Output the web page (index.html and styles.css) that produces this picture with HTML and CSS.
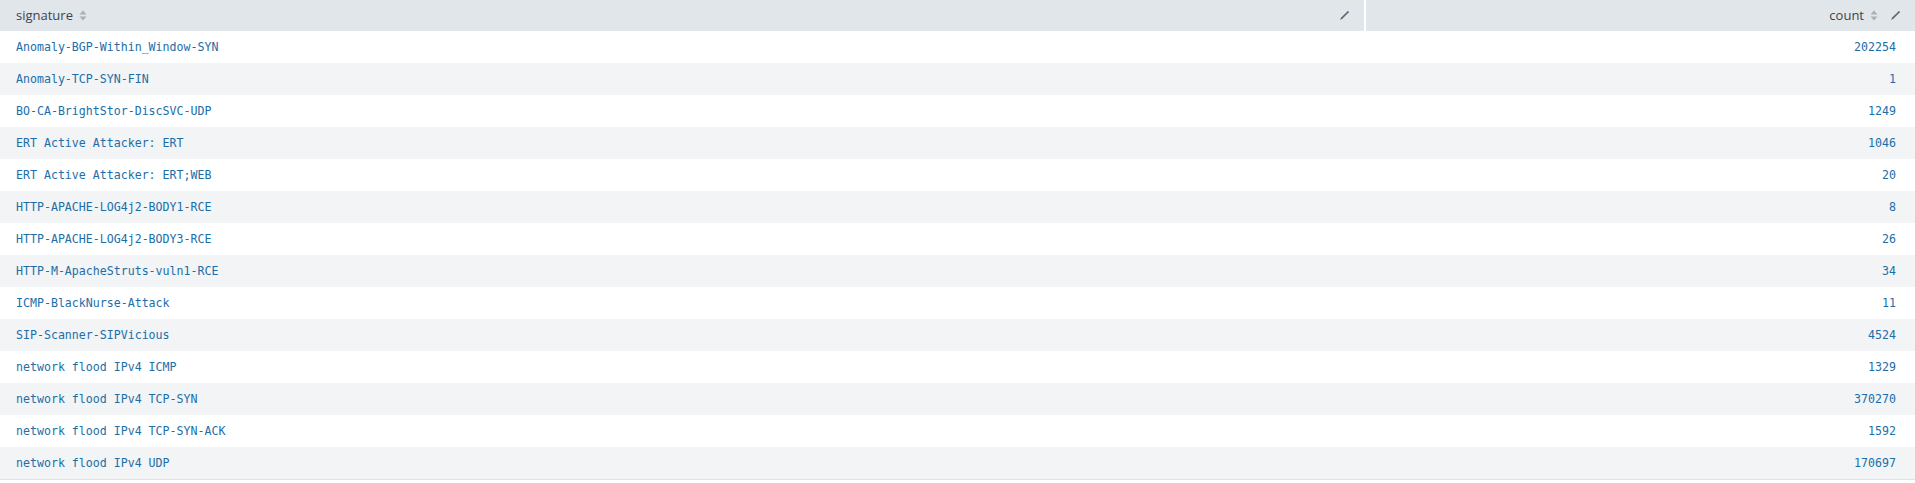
FILE: index.html
```html
<!DOCTYPE html>
<html>
<head>
<meta charset="utf-8">
<link rel="stylesheet" href="styles.css">
</head>
<body>
<table class="grid">
  <thead>
    <tr>
      <th class="col-sig">
        <div class="th-inner">
          <span class="th-label">signature</span>
          <svg class="sort" width="8" height="11" viewBox="0 0 8 11"><path d="M4 0.5 L7.5 4.5 H0.5 Z M4 10.5 L7.5 6.5 H0.5 Z" fill="#a7afb7"/></svg>
          <span class="spacer"></span>
          <svg class="pencil" width="11" height="11" viewBox="0 0 11 11"><path d="M1 10 L2.2 7.6 L8.4 1.4 L9.6 2.6 L3.4 8.8 Z" fill="#5c6773"/><path d="M8.4 1.4 L9.6 2.6" stroke="#3d6fa0" stroke-width="1.4"/></svg>
        </div>
      </th>
      <th class="col-count">
        <div class="th-inner right">
          <span class="th-label">count</span>
          <svg class="sort" width="8" height="11" viewBox="0 0 8 11"><path d="M4 0.5 L7.5 4.5 H0.5 Z M4 10.5 L7.5 6.5 H0.5 Z" fill="#a7afb7"/></svg>
          <svg class="pencil gap" width="11" height="11" viewBox="0 0 11 11"><path d="M1 10 L2.2 7.6 L8.4 1.4 L9.6 2.6 L3.4 8.8 Z" fill="#5c6773"/><path d="M8.4 1.4 L9.6 2.6" stroke="#3d6fa0" stroke-width="1.4"/></svg>
        </div>
      </th>
    </tr>
  </thead>
  <tbody>
    <tr><td>Anomaly-BGP-Within_Window-SYN</td><td class="num">202254</td></tr>
    <tr><td>Anomaly-TCP-SYN-FIN</td><td class="num">1</td></tr>
    <tr><td>BO-CA-BrightStor-DiscSVC-UDP</td><td class="num">1249</td></tr>
    <tr><td>ERT Active Attacker: ERT</td><td class="num">1046</td></tr>
    <tr><td>ERT Active Attacker: ERT;WEB</td><td class="num">20</td></tr>
    <tr><td>HTTP-APACHE-LOG4j2-BODY1-RCE</td><td class="num">8</td></tr>
    <tr><td>HTTP-APACHE-LOG4j2-BODY3-RCE</td><td class="num">26</td></tr>
    <tr><td>HTTP-M-ApacheStruts-vuln1-RCE</td><td class="num">34</td></tr>
    <tr><td>ICMP-BlackNurse-Attack</td><td class="num">11</td></tr>
    <tr><td>SIP-Scanner-SIPVicious</td><td class="num">4524</td></tr>
    <tr><td>network flood IPv4 ICMP</td><td class="num">1329</td></tr>
    <tr><td>network flood IPv4 TCP-SYN</td><td class="num">370270</td></tr>
    <tr><td>network flood IPv4 TCP-SYN-ACK</td><td class="num">1592</td></tr>
    <tr><td>network flood IPv4 UDP</td><td class="num">170697</td></tr>
  </tbody>
</table>
</body>
</html>
```
FILE: styles.css
```css
html, body {
  margin: 0;
  padding: 0;
  background: #ffffff;
}
.grid {
  width: 1915px;
  border-collapse: collapse;
  border-spacing: 0;
  table-layout: fixed;
  border-bottom: 1px solid #dfe3e7;
}
.grid th {
  background: #e1e6eb;
  height: 31px;
  padding: 0;
  font-family: "Open Sans", "Liberation Sans", sans-serif;
  font-weight: normal;
  font-size: 13px;
  color: #3c444d;
  text-align: left;
}
.col-sig {
  width: 1364px;
  border-right: 2px solid #ffffff;
}
.th-inner {
  display: flex;
  align-items: center;
  height: 31px;
  padding: 0 14px 0 16px;
}
.th-inner.right {
  justify-content: flex-end;
  padding: 0 14px 0 0;
}
.th-label {
  line-height: 31px;
}
.sort {
  margin-left: 6px;
  display: block;
}
.spacer {
  flex: 1;
}
.pencil {
  display: block;
}
.pencil.gap {
  margin-left: 12px;
}
.grid td {
  height: 32px;
  padding: 0 0 0 16px;
  font-family: "DejaVu Sans Mono", "Liberation Mono", monospace;
  font-size: 11.6px;
  color: #1c6ea8;
  white-space: pre;
}
.grid td.num {
  text-align: right;
  padding: 0 19px 0 0;
}
.grid tbody tr:nth-child(even) td {
  background: #f2f4f5;
}
```
